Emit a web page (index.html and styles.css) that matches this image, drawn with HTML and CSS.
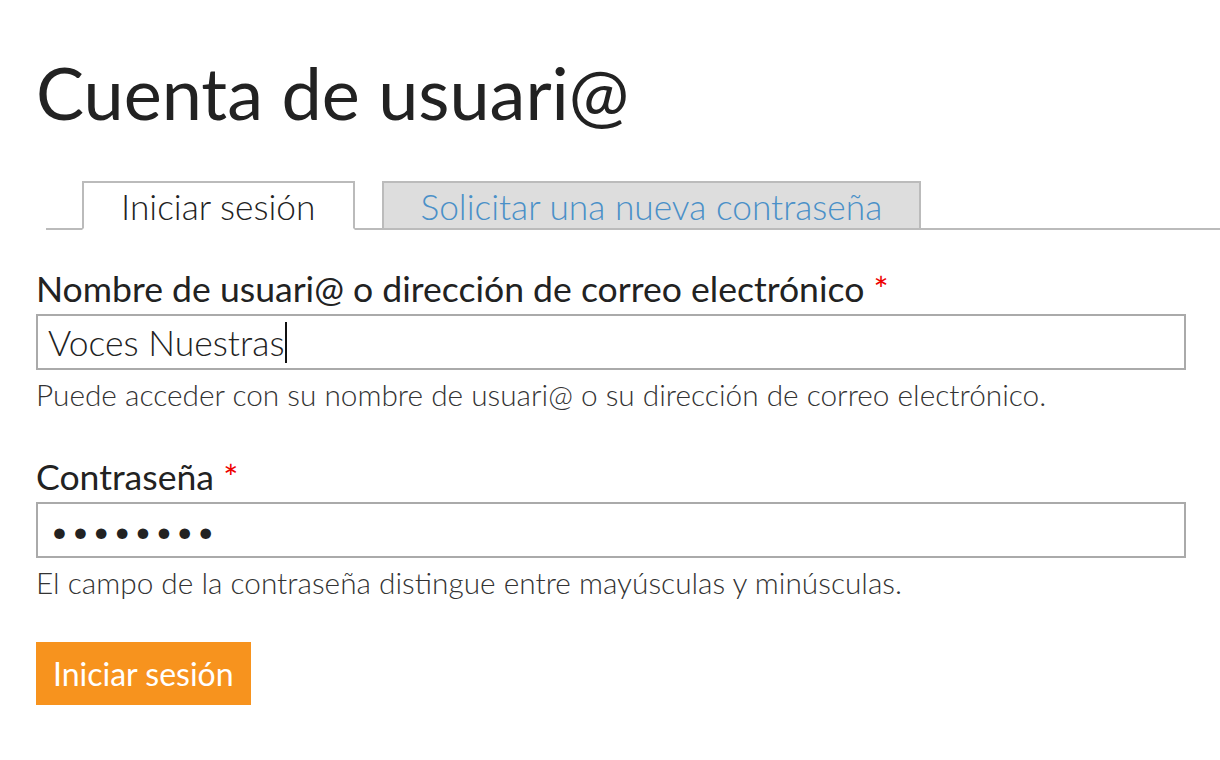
FILE: index.html
```html
<!DOCTYPE html>
<html lang="es">
<head>
<meta charset="utf-8">
<title>Cuenta de usuari@</title>
<link rel="stylesheet" href="styles.css">
</head>
<body>
<main class="page">
  <h1 class="title">Cuenta de usuari@</h1>
  <ul class="tabs">
    <li class="tab tab-active">Iniciar sesión</li>
    <li class="tab tab-other"><a href="#">Solicitar una nueva contraseña</a></li>
  </ul>
  <form class="form">
    <div class="field">
      <label class="label">Nombre de usuari@ o dirección de correo electrónico <span class="req">*</span></label>
      <div class="input"><span class="value">Voces Nuestras</span><span class="caret"></span></div>
      <p class="desc">Puede acceder con su nombre de usuari@ o su dirección de correo electrónico.</p>
    </div>
    <div class="field field-last">
      <label class="label">Contraseña <span class="req">*</span></label>
      <div class="input input-pass"><span class="dots">••••••••</span></div>
      <p class="desc">El campo de la contraseña distingue entre mayúsculas y minúsculas.</p>
    </div>
    <button type="button" class="btn">Iniciar sesión</button>
  </form>
</main>
</body>
</html>
```
FILE: styles.css
```css
html, body {
  margin: 0;
  padding: 0;
  background: #fff;
}
body {
  font-family: Lato, "Open Sans", sans-serif;
  color: #222;
}
.page {
  padding: 0 34px 0 36px;
}
.title {
  margin: 0;
  padding-top: 52px;
  font-size: 72px;
  font-weight: 400;
  line-height: 80px;
  color: #222;
}
.tabs {
  list-style: none;
  display: flex;
  gap: 27px;
  margin: 49px -34px 0 10px;
  padding: 0 0 0 36px;
  border-bottom: 2px solid #bbb;
}
.tab {
  border: 2px solid #bbb;
  margin-bottom: -2px;
  height: 45px;
  font-size: 35.3px;
  font-weight: 300;
  line-height: 47px;
  box-sizing: content-box;
  white-space: nowrap;
}
.tab-active {
  padding: 0 38px 0 37px;
  background: #fff;
  border-bottom-color: #fff;
  color: #222;
}
.tab-other {
  padding: 0 37px 0 36px;
  background: #ddd;
}
.tab-other a {
  color: #4a90c8;
  text-decoration: none;
}
.form {
  margin-top: 40px;
}
.field {
  margin-bottom: 46px;
}
.field-last {
  margin-bottom: 42px;
}
.label {
  display: block;
  font-size: 35.6px;
  font-weight: 400;
  line-height: 38px;
  color: #222;
  white-space: nowrap;
}
.req {
  color: #e00;
}
.input {
  margin-top: 6px;
  height: 52px;
  border: 2px solid #aaa;
  display: flex;
  align-items: center;
  padding: 0 10px;
  font-size: 35.5px;
  font-weight: 300;
  color: #222;
}
.caret {
  display: inline-block;
  width: 2px;
  height: 41px;
  background: #111;
  margin-left: 1px;
}
.dots {
  font-size: 36px;
  letter-spacing: 0;
  padding-left: 1px;
}
.desc {
  margin: 8px 0 0;
  font-size: 29.8px;
  font-weight: 300;
  line-height: 34px;
  color: #333;
  white-space: nowrap;
}
.btn {
  display: block;
  margin: 0;
  border: 0;
  background: #f7931e;
  color: #fff;
  font-family: Lato, sans-serif;
  font-size: 32px;
  font-weight: 400;
  padding: 0 17px;
  height: 63px;
  cursor: pointer;
}
```
